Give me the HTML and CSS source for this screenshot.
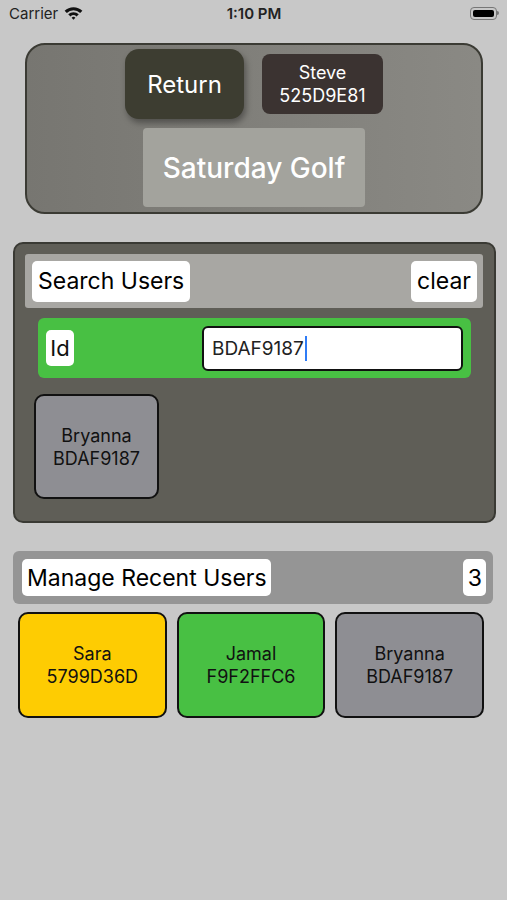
FILE: index.html
```html
<!DOCTYPE html>
<html>

<head>
    <title>Saturday Golf</title>
    <link rel="stylesheet" href="styles.css">
</head>

<body>
    <div class="status-bar">
        <div class="carrier">
            Carrier
            <svg class="wifi" width="19" height="14" viewBox="0 0 18 13">
                <path d="M0.6 4.4 A12 12 0 0 1 17.4 4.4 L15.3 6.5 A9 9 0 0 0 2.7 6.5 Z" fill="#111"/>
                <path d="M4 7.7 A7.2 7.2 0 0 1 14 7.7 L11.9 9.8 A4.2 4.2 0 0 0 6.1 9.8 Z" fill="#111"/>
                <path d="M7.2 10.9 A2.6 2.6 0 0 1 10.8 10.9 L9 12.8 Z" fill="#111"/>
            </svg>
        </div>
        <div class="time">1:10 PM</div>
        <div class="battery">
            <div class="battery-body"><div class="battery-fill"></div></div>
            <div class="battery-nub"></div>
        </div>
    </div>

    <div class="main">
        <div class="top-card">
            <div class="top-row">
                <div class="return-button">Return</div>
                <div class="current-user">Steve<br>525D9E81</div>
            </div>
            <div class="group-name">Saturday Golf</div>
        </div>

        <div class="search-card">
            <div class="search-header">
                <div class="label-box">Search Users</div>
                <div class="label-box">clear</div>
            </div>
            <div class="id-row">
                <div class="id-label">Id</div>
                <div class="id-input">BDAF9187<span class="cursor"></span></div>
            </div>
            <div class="results">
                <div class="user-tile gray">Bryanna<br>BDAF9187</div>
            </div>
        </div>

        <div class="recent-header">
            <div class="label-box small">Manage Recent Users</div>
            <div class="label-box small">3</div>
        </div>
        <div class="recent-list">
            <div class="user-tile yellow">Sara<br>5799D36D</div>
            <div class="user-tile green">Jamal<br>F9F2FFC6</div>
            <div class="user-tile gray">Bryanna<br>BDAF9187</div>
        </div>
    </div>
</body>

</html>
```

FILE: styles.css
```css
* {
    box-sizing: border-box;
}

body {
    margin: 0;
    background-color: #c8c8c8;
    font-family: 'Inter', 'Roboto', sans-serif;
    color: #111;
}

/* status bar */
.status-bar {
    height: 26px;
    display: flex;
    align-items: center;
    justify-content: space-between;
    padding: 0 8px 0 9px;
    font-size: 15px;
    color: #222;
}

.carrier {
    display: flex;
    align-items: center;
    gap: 6px;
    width: 100px;
}

.time {
    font-weight: 600;
}

.battery {
    width: 100px;
    display: flex;
    justify-content: flex-end;
    align-items: center;
}

.battery-body {
    width: 27px;
    height: 13px;
    border: 1px solid #777;
    border-radius: 4px;
    padding: 2px;
}

.battery-fill {
    width: 100%;
    height: 100%;
    background-color: #000;
    border-radius: 2px;
}

.battery-nub {
    width: 2px;
    height: 4px;
    background-color: #777;
    border-radius: 0 2px 2px 0;
}

.main {
    padding-top: 17px;
}

/* top card */
.top-card {
    margin: 0 24px 0 25px;
    height: 171px;
    border: 2px solid #3b3b34;
    border-radius: 20px;
    background: linear-gradient(to right, #777671, #8a8984);
    display: flex;
    flex-direction: column;
    align-items: center;
    padding-top: 4px;
    gap: 9px;
}

.top-row {
    display: flex;
    align-items: center;
    gap: 18px;
}

.return-button {
    width: 119px;
    height: 70px;
    border-radius: 14px;
    background-color: #3d3d31;
    color: #fff;
    font-size: 24px;
    display: flex;
    align-items: center;
    justify-content: center;
    box-shadow: 2px 4px 6px rgba(0, 0, 0, 0.35);
}

.current-user {
    width: 121px;
    height: 60px;
    border-radius: 8px;
    background-color: #3b3331;
    color: #fff;
    font-size: 18px;
    line-height: 23px;
    text-align: center;
    padding-top: 7px;
}

.group-name {
    width: 222px;
    height: 79px;
    border-radius: 4px;
    background-color: #a3a39d;
    color: #fff;
    font-size: 28px;
    font-weight: 500;
    display: flex;
    align-items: center;
    justify-content: center;
}

/* search card */
.search-card {
    margin: 28px 11px 0 13px;
    height: 281px;
    border: 2px solid #3a3a34;
    border-radius: 10px;
    background-color: #5f5e57;
    padding: 10px 11px 0 10px;
}

.search-header {
    height: 54px;
    background-color: #a8a7a3;
    border-radius: 3px;
    display: flex;
    align-items: center;
    justify-content: space-between;
    padding: 0 6px 0 7px;
}

.label-box {
    background-color: #fff;
    border-radius: 5px;
    height: 41px;
    padding: 0 6px;
    font-size: 23px;
    display: flex;
    align-items: center;
    color: #000;
}

.id-row {
    margin: 10px 12px 0 13px;
    height: 60px;
    background-color: #48c043;
    border-radius: 6px;
    display: flex;
    align-items: center;
    justify-content: space-between;
    padding: 0 8px 0 8px;
}

.id-label {
    background-color: #fff;
    border-radius: 5px;
    height: 36px;
    width: 28px;
    font-size: 22px;
    display: flex;
    align-items: center;
    justify-content: center;
}

.id-input {
    width: 261px;
    height: 45px;
    background-color: #fff;
    border: 2px solid #111;
    border-radius: 6px;
    font-size: 19px;
    display: flex;
    align-items: center;
    padding-left: 8px;
    color: #222;
}

.cursor {
    width: 2px;
    height: 25px;
    background-color: #2f7cf6;
    margin-left: 1px;
}

.results {
    margin-top: 16px;
    padding-left: 9px;
}

.user-tile {
    border: 2px solid #111;
    border-radius: 10px;
    font-size: 18px;
    line-height: 23px;
    text-align: center;
    display: flex;
    align-items: center;
    justify-content: center;
    color: #111;
}

.results .user-tile {
    width: 125px;
    height: 105px;
}

.gray {
    background-color: #8e8e93;
}

.yellow {
    background-color: #fecc02;
}

.green {
    background-color: #48c043;
}

/* recent users */
.recent-header {
    margin: 28px 14px 0 13px;
    height: 53px;
    background-color: #959595;
    border-radius: 6px;
    display: flex;
    align-items: center;
    justify-content: space-between;
    padding: 0 7px 0 9px;
}

.label-box.small {
    height: 37px;
    padding: 0 4px 0 5px;
    font-size: 23px;
}

.recent-list {
    margin: 8px 23px 0 18px;
    display: flex;
    gap: 10px;
}

.recent-list .user-tile {
    flex: 1;
    height: 106px;
}
```
